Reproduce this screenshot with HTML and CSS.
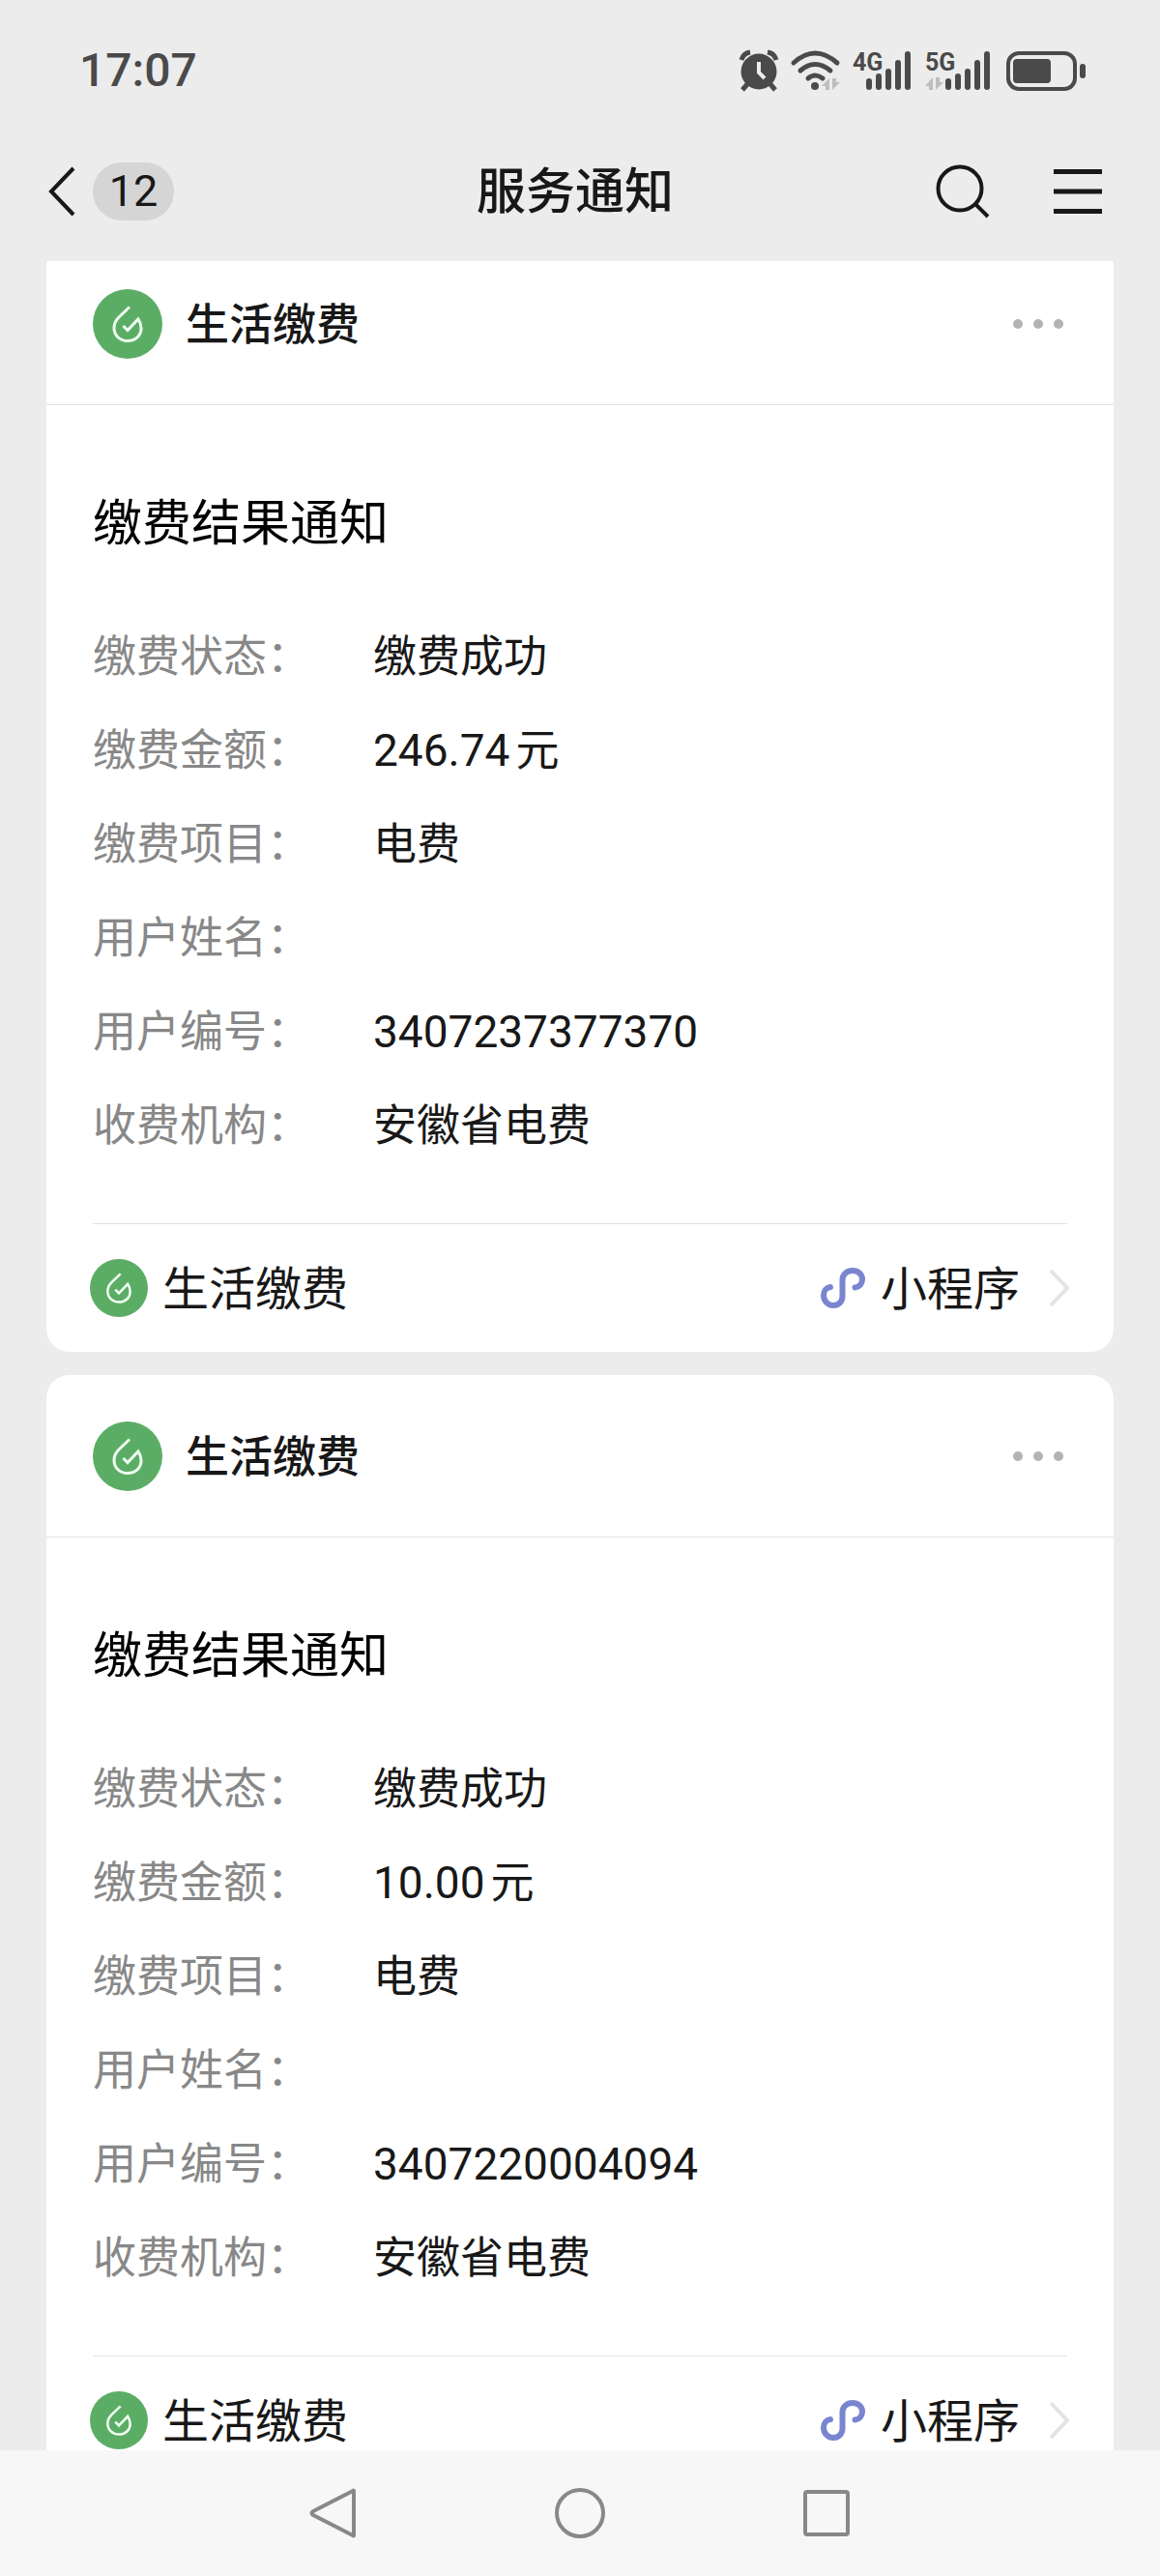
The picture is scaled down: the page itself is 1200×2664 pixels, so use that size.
FILE: index.html
```html
<!DOCTYPE html>
<html lang="zh-CN">

<head>
    <meta charset="UTF-8">
    <meta name="viewport" content="width=device-width, initial-scale=1.0">
    <title>服务通知</title>
    <link rel="stylesheet" href="styles.css">
</head>

<body>
    <!-- 图标 -->
    <svg class="sprite" aria-hidden="true">
        <symbol id="drop" viewBox="0 0 72 72">
            <circle cx="36" cy="36" r="36" fill="#5bad65"/>
            <path d="M38 18.500L27 29C23 33 22 36 22 40C22 48 28 53.500 36 53.500C44 53.500 50 48 50 40.500C50 37 49 34 47 31L36 42.500L31.500 38" fill="none" stroke="#f0fff2" stroke-width="3"/>
        </symbol>
        <symbol id="mini" viewBox="0 0 46 42">
            <path d="M10 20C6 20.500 3 24 3 28.500C3 34 7 39 13 39C18.500 39 22.500 35 22.500 29.500V12.500C22.500 7 27 3 33 3C38.500 3 43 6.500 43 12C43 16.500 40 20 35.500 20.500" fill="none" stroke="#7a85d0" stroke-width="6" stroke-linecap="round"/>
        </symbol>
        <symbol id="arrow" viewBox="0 0 22 40">
            <path d="M2 2L19 20L2 38" fill="none" stroke="#e3e3e3" stroke-width="4"/>
        </symbol>
        <symbol id="dots" viewBox="0 0 52 12">
            <g fill="#b3b3b3">
                <circle cx="5" cy="6" r="5"/>
                <circle cx="26" cy="6" r="5"/>
                <circle cx="47" cy="6" r="5"/>
            </g>
        </symbol>
    </svg>

    <!-- 状态栏 -->
    <div class="status">
        <time class="clock">17:07</time>
        <div class="status-icons">
            <svg width="42" height="42" viewBox="0 0 42 42">
                <circle cx="21" cy="22" r="18.500" fill="#4a4a4a"/>
                <path d="M3 10Q5 3 12 2M30 2Q37 3 39 10" fill="none" stroke="#4a4a4a" stroke-width="5"/>
                <path d="M10 34L4 41M32 34L38 41" stroke="#4a4a4a" stroke-width="5"/>
                <path d="M21 12V23L27 29" fill="none" stroke="#ececec" stroke-width="4"/>
            </svg>
            <svg width="52" height="42" viewBox="0 0 52 42">
                <g fill="none" stroke="#4a4a4a" stroke-width="5" stroke-linecap="round">
                    <path d="M3 13Q25 -7 48 13"/>
                    <path d="M10 21Q25 8 41 21"/>
                    <path d="M18 29Q25 23 33 29"/>
                </g>
                <circle cx="25" cy="37" r="4" fill="#4a4a4a"/>
                <path d="M40 29V41H36V37H32ZM43 29H47V33H51L43 41Z" fill="#bdbdbd"/>
            </svg>
            <svg width="62" height="42" viewBox="0 0 62 42">
                <text class="network" x="0" y="21">4G</text>
                <path d="M17 32V38M27 27V38M37 22V38M47 13V38M57 4V38" stroke="#4a4a4a" stroke-width="6" stroke-linecap="round"/>
            </svg>
            <svg width="69" height="42" viewBox="0 0 69 42">
                <text class="network" x="1" y="21">5G</text>
                <path d="M9 28V41H5V37H1ZM12 28H16V33H20L12 41Z" fill="#bdbdbd"/>
                <path d="M25 32V38M35 27V38M45 22V38M55 13V38M65 4V38" stroke="#4a4a4a" stroke-width="6" stroke-linecap="round"/>
            </svg>
            <svg class="battery" width="82" height="42" viewBox="0 0 82 42">
                <rect x="2" y="3" width="69" height="37" rx="11" fill="none" stroke="#4a4a4a" stroke-width="4"/>
                <rect x="7" y="9" width="39" height="25" rx="4" fill="#4a4a4a"/>
                <rect x="76" y="14" width="6" height="15" rx="3" fill="#4a4a4a"/>
            </svg>
        </div>
    </div>

    <!-- 标题栏 -->
    <header class="topbar">
        <button class="back" aria-label="返回">
            <svg width="28" height="52" viewBox="0 0 28 52">
                <path d="M26 2L3 26L26 50" fill="none" stroke="#181818" stroke-width="4"/>
            </svg>
            <span class="badge">12</span>
        </button>
        <h1>服务通知</h1>
        <div class="actions">
            <button aria-label="搜索">
                <svg width="56" height="56" viewBox="0 0 56 56">
                    <circle cx="25" cy="25" r="22.500" fill="none" stroke="#181818" stroke-width="4"/>
                    <path d="M41 41L54 54" stroke="#181818" stroke-width="4"/>
                </svg>
            </button>
            <button aria-label="菜单">
                <svg width="50" height="46" viewBox="0 0 50 46">
                    <path d="M0 2.500H50M0 23H50M0 43.500H50" stroke="#181818" stroke-width="5"/>
                </svg>
            </button>
        </div>
    </header>

    <!-- 通知列表 -->
    <main class="list">
        <article class="card">
            <div class="card-head">
                <svg class="logo" width="72" height="72"><use href="#drop"/></svg>
                <span class="name">生活缴费</span>
                <button aria-label="更多"><svg width="52" height="12"><use href="#dots"/></svg></button>
            </div>
            <div class="card-body">
                <h2>缴费结果通知</h2>
                <dl>
                    <dt>缴费状态：</dt>
                    <dd>缴费成功</dd>
                    <dt>缴费金额：</dt>
                    <dd><span class="num amount">246.74</span>元</dd>
                    <dt>缴费项目：</dt>
                    <dd>电费</dd>
                    <dt>用户姓名：</dt>
                    <dd></dd>
                    <dt>用户编号：</dt>
                    <dd><span class="num">3407237377370</span></dd>
                    <dt>收费机构：</dt>
                    <dd>安徽省电费</dd>
                </dl>
            </div>
            <a class="card-foot" href="#">
                <svg width="60" height="60"><use href="#drop"/></svg>
                <span class="app">生活缴费</span>
                <svg width="46" height="42"><use href="#mini"/></svg>
                <span class="kind">小程序</span>
                <svg width="22" height="40"><use href="#arrow"/></svg>
            </a>
        </article>

        <article class="card">
            <div class="card-head">
                <svg class="logo" width="72" height="72"><use href="#drop"/></svg>
                <span class="name">生活缴费</span>
                <button aria-label="更多"><svg width="52" height="12"><use href="#dots"/></svg></button>
            </div>
            <div class="card-body">
                <h2>缴费结果通知</h2>
                <dl>
                    <dt>缴费状态：</dt>
                    <dd>缴费成功</dd>
                    <dt>缴费金额：</dt>
                    <dd><span class="num amount">10.00</span>元</dd>
                    <dt>缴费项目：</dt>
                    <dd>电费</dd>
                    <dt>用户姓名：</dt>
                    <dd></dd>
                    <dt>用户编号：</dt>
                    <dd><span class="num">3407220004094</span></dd>
                    <dt>收费机构：</dt>
                    <dd>安徽省电费</dd>
                </dl>
            </div>
            <a class="card-foot" href="#">
                <svg width="60" height="60"><use href="#drop"/></svg>
                <span class="app">生活缴费</span>
                <svg width="46" height="42"><use href="#mini"/></svg>
                <span class="kind">小程序</span>
                <svg width="22" height="40"><use href="#arrow"/></svg>
            </a>
        </article>
    </main>

    <!-- 系统导航 -->
    <nav>
        <button aria-label="返回">
            <svg width="54" height="54" viewBox="0 0 54 54">
                <path d="M48 4V50Q48 51 47 50L6 29Q3 27 6 25L47 4Q48 3 48 4Z" fill="none" stroke="#888" stroke-width="4" stroke-linejoin="round"/>
            </svg>
        </button>
        <button aria-label="主页">
            <svg width="54" height="54" viewBox="0 0 54 54">
                <circle cx="27" cy="27" r="24" fill="none" stroke="#888" stroke-width="4"/>
            </svg>
        </button>
        <button aria-label="最近任务">
            <svg width="54" height="54" viewBox="0 0 54 54">
                <rect x="5" y="5" width="44" height="44" rx="2" fill="none" stroke="#888" stroke-width="4"/>
            </svg>
        </button>
    </nav>
</body>

</html>
```
FILE: styles.css
```css
* {
    box-sizing: border-box;
    margin: 0;
    padding: 0;
}

body {
    display: flex;
    flex-direction: column;
    height: 100vh;
    overflow: hidden;
    font-family: "Noto Sans", "Noto Sans CJK SC", sans-serif;
    font-size: 45px;
    line-height: 60px;
    color: #181818;
    background-color: #ececec;
}

button {
    display: flex;
    align-items: center;
    border: none;
    background: none;
    color: inherit;
    font: inherit;
    cursor: pointer;
}

svg {
    display: block;
    flex-shrink: 0;
    overflow: visible;
}

.sprite {
    display: none;
}

/* status bar */
.status {
    display: flex;
    align-items: center;
    justify-content: space-between;
    flex-shrink: 0;
    height: 126px;
    padding: 20px 77px 0 82px;
    color: #4a4a4a;
}

.clock {
    font-family: Roboto, sans-serif;
    font-size: 48px;
    font-weight: 500;
}

.status-icons {
    display: flex;
    gap: 12px;
}

.status-icons .battery {
    margin-left: 4px;
}

.network {
    font-family: Roboto, sans-serif;
    font-size: 25px;
    font-weight: 700;
    fill: #4a4a4a;
}

/* title bar */
.topbar {
    display: grid;
    grid-template-columns: 1fr auto 1fr;
    align-items: center;
    flex-shrink: 0;
    height: 144px;
    padding: 0 60px 0 50px;
}

.back {
    gap: 18px;
    justify-self: start;
}

.badge {
    width: 84px;
    border-radius: 30px;
    background-color: #d5d5d5;
    font-family: Roboto, sans-serif;
    text-align: center;
}

h1 {
    padding-bottom: 4px;
    font-size: 51px;
    font-weight: 500;
    line-height: 72px;
}

.actions {
    display: flex;
    align-items: center;
    justify-self: end;
    gap: 66px;
}

/* the list is scrolled a little under the title bar */
.list {
    flex: 1;
    min-height: 0;
    padding: 0 48px;
    overflow: hidden;
}

.card {
    margin-bottom: 24px;
    border-radius: 24px;
    background-color: #fff;
}

.card:first-child {
    margin-top: -19px;
}

.card-head {
    display: flex;
    align-items: center;
    height: 168px;
    padding: 0 52px 0 48px;
    border-bottom: 1px solid #e2e2e2;
}

.name {
    flex: 1;
    margin-left: 24px;
    font-weight: 500;
}

.card-body {
    margin: 0 48px;
    padding: 84px 0 54px;
    border-bottom: 1px solid #e2e2e2;
}

h2 {
    margin-bottom: 54px;
    color: #000;
    font-size: 51px;
    font-weight: 400;
    line-height: 72px;
}

dl {
    display: grid;
    grid-template-columns: 290px 1fr;
    grid-auto-rows: 97px;
    line-height: 97px;
}

dt {
    color: #888;
}

.num {
    font-family: Roboto, sans-serif;
    font-size: 46px;
}

.amount {
    margin-right: 6px;
}

.card-foot {
    display: flex;
    align-items: center;
    height: 132px;
    padding: 0 45px;
    color: inherit;
    font-size: 48px;
    text-decoration: none;
}

.app {
    flex: 1;
    margin-left: 15px;
}

.kind {
    margin: 0 30px 0 16px;
}

/* system navigation */
nav {
    display: flex;
    align-items: center;
    justify-content: center;
    gap: 201px;
    flex-shrink: 0;
    height: 130px;
    background-color: #f7f7f7;
}
```
